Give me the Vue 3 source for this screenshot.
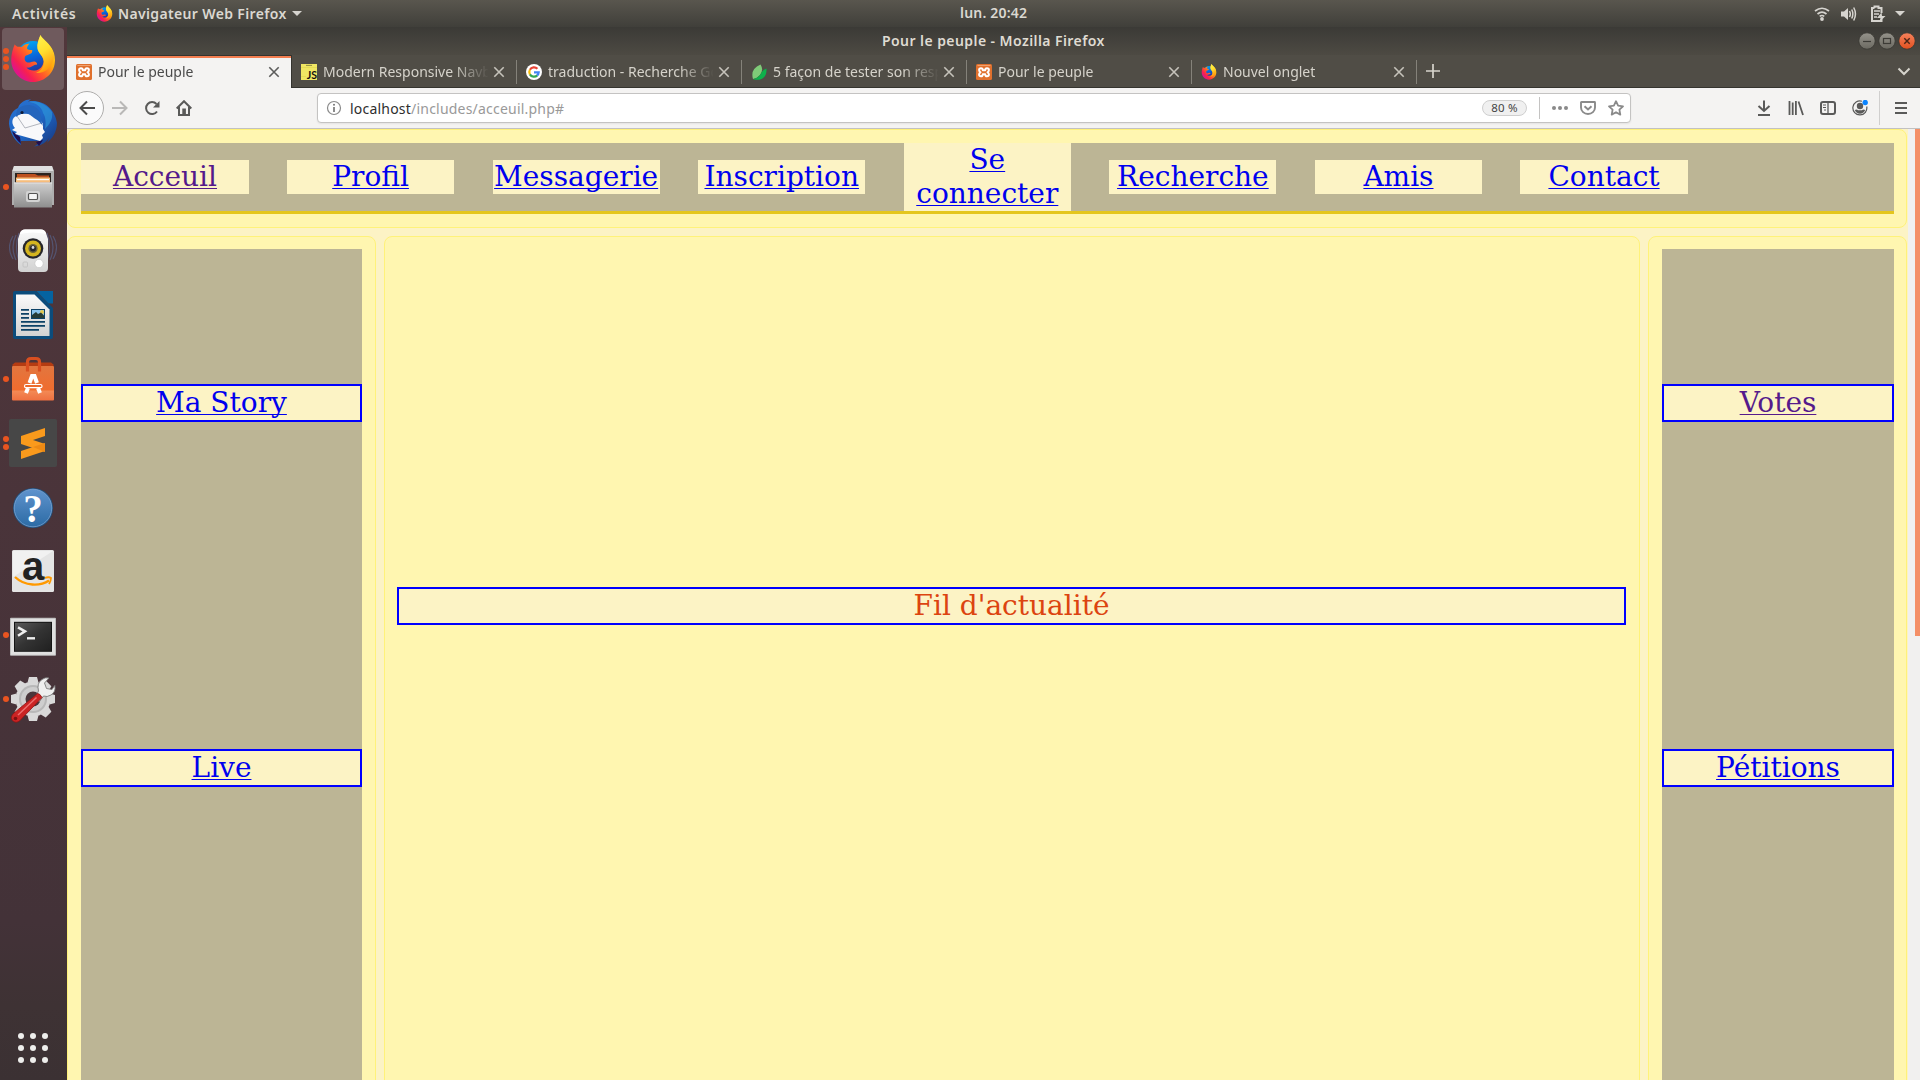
<script setup>
const tabs = [
  { title: 'Pour le peuple', icon: 'xampp', active: true },
  { title: 'Modern Responsive Navbar', icon: 'js', glyph: 'JS' },
  { title: 'traduction - Recherche Google', icon: 'google' },
  { title: '5 façon de tester son responsive', icon: 'leaf' },
  { title: 'Pour le peuple', icon: 'xampp' },
  { title: 'Nouvel onglet', icon: 'firefox' },
]
const dock = [
  { icon: 'firefox', dots: 3, active: true },
  { icon: 'thunderbird', dots: 0 },
  { icon: 'files', dots: 1 },
  { icon: 'rhythmbox', dots: 0 },
  { icon: 'writer', dots: 0 },
  { icon: 'software', dots: 1 },
  { icon: 'sublime', dots: 2 },
  { icon: 'help', dots: 0, glyph: '?' },
  { icon: 'amazon', dots: 0, glyph: 'a' },
  { icon: 'terminal', dots: 1 },
  { icon: 'tools', dots: 1 },
]
const nav = ['Acceuil', 'Profil', 'Messagerie', 'Inscription', 'Se connecter', 'Recherche', 'Amis', 'Contact']
</script>

<template>
  <svg class="defs" width="0" height="0" aria-hidden="true">
    <defs>
      <linearGradient id="fxBody" x1="0.9" y1="0.1" x2="0.15" y2="0.8">
        <stop offset="0" stop-color="#ffe226" /><stop offset=".35" stop-color="#ffa90e" />
        <stop offset=".62" stop-color="#ff5a2a" /><stop offset=".85" stop-color="#f8204f" /><stop offset="1" stop-color="#e01587" />
      </linearGradient>
      <linearGradient id="fxFlame" x1="0" y1="0" x2="0.3" y2="1">
        <stop offset="0" stop-color="#fff44f" /><stop offset=".5" stop-color="#ffe030" /><stop offset="1" stop-color="#ff9a0e" />
      </linearGradient>
      <linearGradient id="fxGlobe" x1="0.3" y1="0" x2="0.6" y2="1">
        <stop offset="0" stop-color="#00a8f4" /><stop offset=".5" stop-color="#0a63d8" /><stop offset="1" stop-color="#2b2a8c" />
      </linearGradient>
      <linearGradient id="tbBlue" x1="0" y1="0" x2="1" y2="1">
        <stop offset="0" stop-color="#2a72d0" /><stop offset=".5" stop-color="#1f68c8" /><stop offset="1" stop-color="#17357c" />
      </linearGradient>
      <linearGradient id="grey" x1="0" y1="0" x2="0" y2="1">
        <stop offset="0" stop-color="#cfcfcf" /><stop offset="1" stop-color="#8e8e8e" />
      </linearGradient>
      <linearGradient id="white" x1="0" y1="0" x2="0" y2="1">
        <stop offset="0" stop-color="#fafafa" /><stop offset="1" stop-color="#d2d2d2" />
      </linearGradient>
      <linearGradient id="bag" x1="0" y1="0" x2="0" y2="1">
        <stop offset="0" stop-color="#e2763f" /><stop offset=".7" stop-color="#f06c2e" /><stop offset=".72" stop-color="#f38a55" /><stop offset="1" stop-color="#ef7040" />
      </linearGradient>
      <linearGradient id="helpBlue" x1="0" y1="0" x2="0" y2="1">
        <stop offset="0" stop-color="#5f93cd" /><stop offset="1" stop-color="#2c6ba5" />
      </linearGradient>
      <linearGradient id="term" x1="0" y1="0" x2="1" y2="1">
        <stop offset="0" stop-color="#5a5a5a" /><stop offset=".5" stop-color="#333" /><stop offset="1" stop-color="#202020" />
      </linearGradient>
      <linearGradient id="btnGrey" x1="0" y1="0" x2="0" y2="1">
        <stop offset="0" stop-color="#95938b" /><stop offset="1" stop-color="#6b6961" />
      </linearGradient>
      <linearGradient id="btnRed" x1="0" y1="0" x2="0" y2="1">
        <stop offset="0" stop-color="#f6825c" /><stop offset="1" stop-color="#e2501f" />
      </linearGradient>
    </defs>

    <symbol id="i-firefox" viewBox="0 0 48 48">
      <circle cx="24" cy="23" r="17" fill="url(#fxGlobe)" />
      <path d="M5.8 9.2 C4 13 2.2 19 2.2 25.500 C2.500 37 12 47 24 47 C36 47 46 37.500 46 25 C46 15 40 9.500 36.500 6 C33 2.500 32 1.500 31.500 0 C29.500 5 28 9 28.500 13 C29 18.500 34 20 34.500 26 C34.500 31 31 35 26 35.500 C22.500 36 19 34.500 17.500 32.500 C22 33.500 24 29.500 27.500 29.800 C28.800 29.500 28 27 25.500 26.500 C22 26.200 20.500 29 17 26.700 C15.300 25.500 15.500 23 16 21.500 C17 19.500 20 20.500 23 17.500 L23.300 15 C20.500 15 18.500 14.500 18 13.500 C18 11.500 19.500 9.500 20.500 8.500 C17 8.800 14.500 10 12.500 12 C10 11.500 8.500 11.800 8 11.500 C6.500 10.500 6 9.800 5.800 9.200Z" fill="url(#fxBody)" />
      <path d="M31.500 0 C29.500 5 27.800 9 28.500 13.500 C29.200 18.500 34.500 20.500 35 26.500 C35.200 31 32 36 27 38 C36 38.500 43 33 45 22 C44.500 14 40 9.500 36.500 6 C33 2.500 32 1.500 31.500 0Z" fill="url(#fxFlame)" />
    </symbol>

    <symbol id="i-thunderbird" viewBox="0 0 48 48">
      <path d="M9 9 C11 3 17 0 22 .5 C20 1.500 19 2.500 19 2.500 C34 0 46 10 48 24 C48 33 43 40 38 43.500 L40 39 C36 45 30 47 25 47.500 C28 46 30 44 31 42 L12 42 L12 46 C6 42 1 34 0 25 C0 17 4 11 9 9Z" fill="url(#tbBlue)" />
      <path d="M3 32 C5 38 8 41 12 45 L11 38Z M27 43 l7 -2 -4 6z" fill="#1d0f52" />
      <path d="M4 20 C6 16 14 14 19 15 C26 17 31 20 34 25 L34 30 L36 33 L33 36 L34 39 L31 42 L6 35 L8 33 L3 31 L6 29 C3 26 3 22 4 20Z" fill="#f8f8fa" />
      <path d="M8 17 L16 29 L33 24" fill="none" stroke="#a9adb5" stroke-width=".9" />
      <path d="M10 9 C16 4 27 5 31 13 C33 18 31 20 34 27 C28 19 25 20 20 15 C16 13 10 15 7 18 C7 13 8 11 10 9Z" fill="#2465bd" />
      <path d="M20 3 C27 4 33 8 34 14 C37 18 37 25 36 30 C41 25 44 20 43 13 C38 6 29 1 20 3Z" fill="#2f9bdc" opacity=".6" />
      <circle cx="13" cy="13.500" r="1.600" fill="#101b38" />
    </symbol>

    <symbol id="i-files" viewBox="0 0 48 48">
      <path d="M5 3 H43 L45 8 V42 H3 V8Z" fill="#aeaeae" />
      <path d="M5 3 H43 L44.500 8 H3.500Z" fill="#e0e0e0" />
      <rect x="6" y="10" width="36" height="12" fill="#2d2420" />
      <path d="M8 11 H26 L29 12.500 H40 V20 H8Z" fill="#bd501f" />
      <rect x="7" y="14.500" width="34" height="5" fill="#f6bd7c" /><rect x="8" y="16" width="32" height="1.200" fill="#fff" />
      <path d="M5 19.500 H43 V44.500 H5Z" fill="url(#grey)" />
      <path d="M5 19.500 H43 V20.600 H5Z" fill="#e4e4e4" />
      <rect x="17" y="28" width="14" height="11" rx="2" fill="#d3d3d3" />
      <rect x="19.500" y="30.500" width="9" height="6" rx="1" fill="#f5f5f5" stroke="#555" stroke-width="1.200" />
    </symbol>

    <symbol id="i-rhythmbox" viewBox="0 0 48 48">
      <g fill="none" stroke="#586894" stroke-width="1.200" opacity=".6">
        <path d="M7 8 Q1 20 7 33 M4 9 Q-3 20 4 32 M10 6 Q5 20 10 34" /><path d="M41 8 Q47 20 41 33 M44 9 Q51 20 44 32 M38 6 Q43 20 38 34" />
      </g>
      <path d="M11 6 Q12 2.500 16 2.500 H32 Q36 2.500 37 6 L39 12 V41 Q39 45 35 45 H13 Q9 45 9 41 V12Z" fill="url(#white)" />
      <path d="M11 7 Q12 2.500 16 2.500 H32 Q36 2.500 37 7 Q24 4 11 7Z" fill="#fff" />
      <circle cx="24" cy="21.500" r="10.300" fill="#26262b" /><circle cx="24" cy="21.500" r="8" fill="#d5b51f" />
      <circle cx="24" cy="21.500" r="4.600" fill="#6b6238" /><circle cx="24" cy="21.500" r="3" fill="#26262b" /><circle cx="24" cy="20.500" r="1.400" fill="#ddd" />
      <circle cx="30" cy="36.500" r="4.200" fill="#fff" stroke="#c6c6c6" stroke-width=".7" />
      <rect x="14" y="35" width="4.500" height="5" rx="1" fill="none" stroke="#c4c4c4" />
    </symbol>

    <symbol id="i-writer" viewBox="0 0 48 48">
      <path d="M6 0 H27 L44 17 V46 Q44 48 42 48 H6 Q4 48 4 46 V2 Q4 0 6 0Z" fill="#0b4c7c" />
      <path d="M7 3.500 H25.500 L40.500 18.500 V45 H7Z" fill="url(#white)" />
      <path d="M27.500 0 H44 V12.500 H39.500Z" fill="#0563a0" />
      <path d="M12 18.800 h8 M12 22.800 h8 M12 26.800 h8 M12 30.800 h24 M12 34.800 h24 M12 38.800 h18" stroke="#0c4166" stroke-width="1.800" />
      <rect x="22" y="18" width="14" height="10" fill="#0c4166" /><rect x="23" y="19" width="12" height="8" fill="#89c3ec" />
      <circle cx="33" cy="21" r="2" fill="#e3c74c" /><path d="M23 27 V24 l4-3 2 2 3-1.500 3 3 V27Z" fill="#263b35" />
    </symbol>

    <symbol id="i-software" viewBox="0 0 48 48">
      <g transform="translate(0 2)">
        <path d="M3 8 L6 5.500 H42 L45 8 L43 10 H5Z" fill="#b53c12" />
        <rect x="3" y="9" width="42" height="34.500" rx="1" fill="url(#bag)" />
        <path d="M18.500 14.500 V5 Q18.500 1.500 22 1.500 H27 Q30.500 1.500 30.500 5 V14.500" fill="none" stroke="#d94f20" stroke-width="3.200" />
        <path d="M17 36 L19 31 M31 36 L29 31" stroke="#fff" stroke-width="4" />
        <path d="M20.500 26 L23 19 H25.500 L28 26" fill="none" stroke="#fff" stroke-width="4" />
        <rect x="15.500" y="27.500" width="17.500" height="3.200" rx="1.500" fill="#ec6a2c" stroke="#fff" stroke-width="1.200" />
      </g>
    </symbol>

    <symbol id="i-sublime" viewBox="0 0 48 48">
      <rect width="48" height="48" rx="2" fill="#474747" />
      <path d="M12 17 L36 9 V17 L12 25Z" fill="#fa9a1c" /><path d="M12 17 L36 25 V33 L12 25Z" fill="#fa9a1c" />
      <path d="M12 32 L36 24 V32 L12 40Z" fill="#fa9a1c" /><path d="M24 28 L36 24 V33Z" fill="#e17d0e" opacity=".55" />
    </symbol>

    <symbol id="i-help" viewBox="0 0 48 48">
      <circle cx="24" cy="25" r="20" fill="#20517f" /><circle cx="24" cy="25" r="18.800" fill="url(#helpBlue)" stroke="#86aedb" stroke-width=".7" />
    </symbol>

    <symbol id="i-amazon" viewBox="0 0 48 48">
      <rect x="3" y="3" width="42" height="42" rx="1.500" fill="#e4e4e4" /><path d="M4 4 H44 L4 30Z" fill="#f1f1f1" />
      <path d="M6 30 C16 39.500 31 39.500 40 33.500" fill="none" stroke="#ff9900" stroke-width="2.400" /><path d="M35.500 31 Q40 29.500 42 31 Q42 33.500 40 37" fill="none" stroke="#ff9900" stroke-width="1.800" />
    </symbol>

    <symbol id="i-terminal" viewBox="0 0 48 48">
      <g transform="translate(0 1.800)">
        <rect x="1" y="5" width="46" height="38" rx="1" fill="#bdbdbd" /><rect x="2" y="6" width="44" height="36" fill="#e0e0e0" />
        <rect x="5" y="9" width="38" height="30" fill="#141414" /><rect x="6" y="10" width="36" height="28" fill="url(#term)" />
        <path d="M9 14.500 L16 18.500 L9 23" fill="none" stroke="#eee" stroke-width="2.500" /><path d="M18 25.500 H26" stroke="#eee" stroke-width="2.400" />
      </g>
    </symbol>

    <symbol id="i-tools" viewBox="0 0 48 48">
      <g transform="translate(0 -1)">
        <g fill="#d9d9d9">
          <circle cx="24" cy="25" r="17.500" />
          <g v-for="a in 8" :key="a" :transform="`rotate(${a * 45} 24 25)`"><path d="M18.500 8.500 L20 3 H28 L29.500 8.500Z" /></g>
        </g>
        <circle cx="24" cy="25" r="14" fill="#b8b8b8" /><circle cx="24" cy="25" r="12" fill="#cecece" /><circle cx="24" cy="25" r="7.500" fill="#4b363b" />
        <path d="M26 24 L29.500 17 Q27.500 9 33 5.500 Q36 3 40 4 L35.500 9 L37.500 14.500 L43 15.500 L45.800 11.500 Q47 18 42 21 Q38 23.500 34.500 22 L30 28Z" fill="#efefef" stroke="#7c7c7c" stroke-width=".9" />
        <path d="M28.500 19.500 Q31 19.500 33 23.500 L11 46.500 Q7 50 3.500 46.500 Q.5 43 5 39Z" fill="#cb2424" stroke="#8e1414" stroke-width=".8" /><path d="M27.500 23.500 L9 41" stroke="#ee7070" stroke-width="1.400" />
        <circle cx="6.500" cy="44.500" r="1.800" fill="#7d1010" />
      </g>
    </symbol>

    <symbol id="i-xampp" viewBox="0 0 16 16">
      <rect width="16" height="16" rx="1.500" fill="#e0702d" /><path d="M1.500 1.500 H14.500" stroke="#f0a06d" />
      <path d="M6.800 6.300 Q6.800 4.200 5 4.200 Q3.100 4.200 3.100 6 Q3.100 7.500 4.500 8.300 Q3.100 9 3.100 10.500 Q3.100 12.300 5 12.300 Q6.800 12.300 6.800 10.200 H9.200 Q9.200 12.300 11 12.300 Q12.900 12.300 12.900 10.500 Q12.900 9 11.500 8.300 Q12.900 7.500 12.900 6 Q12.900 4.200 11 4.200 Q9.200 4.200 9.200 6.300Z" fill="none" stroke="#fff" stroke-width="2" stroke-linejoin="round" />
    </symbol>
    <symbol id="i-js" viewBox="0 0 16 16">
      <rect width="16" height="16" fill="#f0e763" /><path d="M0 3.500 H16 M0 12.500 H5" stroke="#e2d94e" stroke-width=".7" /><path d="M5 1.400 H11" stroke="#77733a" stroke-width=".8" />
    </symbol>
    <symbol id="i-google" viewBox="0 0 16 16">
      <circle cx="8" cy="8" r="8" fill="#fff" />
      <g fill="none" stroke-width="2.200">
        <path d="M3.900 5.700 A4.700 4.700 0 0 1 11.400 4.800" stroke="#ea4335" /><path d="M3.900 10.400 A4.800 4.800 0 0 1 3.900 5.700" stroke="#fbbc05" />
        <path d="M11.300 11.400 A4.800 4.800 0 0 1 3.900 10.400" stroke="#34a853" /><path d="M8 8.300 H12.700 A4.800 4.800 0 0 1 11.100 11.500" stroke="#4285f4" />
      </g>
    </symbol>
    <symbol id="i-leaf" viewBox="0 0 16 16">
      <path d="M2 15 Q-1 5 9.500 .5 Q13 6 9 11 Q6 14.500 2 15Z" fill="#7fcb78" /><path d="M15.500 4.500 Q16 14 8.500 15.800 Q5 16 2 15.300 Q8 13.500 10 9.500 Q11 6 15.500 4.500Z" fill="#0db14b" />
    </symbol>
  </svg>

  <div class="desktop">
    <header class="topbar">
      <div class="top-left">
        <span class="activities">Activités</span>
        <svg class="fx16"><use href="#i-firefox" /></svg>
        <span class="appname">Navigateur Web Firefox</span>
        <i class="caret"></i>
      </div>
      <span class="clock">lun. 20:42</span>
      <div class="tray">
        <svg width="16" height="16" viewBox="0 0 16 16"><g fill="none" stroke="#d6d4cf" stroke-width="1.700"><path d="M1 5 Q8 -.5 15 5" /><path d="M3.500 8 Q8 4.200 12.500 8" /><path d="M5.700 10.400 Q8 8.600 10.300 10.400" /></g><circle cx="8" cy="13" r="1.900" fill="#d6d4cf" /></svg>
        <svg width="16" height="16" viewBox="0 0 16 16"><path d="M0 5.500 H3 L7 2 V14 L3 10.500 H0Z" fill="#d6d4cf" /><g fill="none" stroke="#d6d4cf" stroke-width="1.500"><path d="M8.500 5 Q10.200 8 8.500 11" /><path d="M10.700 3.500 Q13 8 10.700 12.500" /><path d="M12.700 1.500 Q16.200 8 12.700 14.500" /></g></svg>
        <svg class="battery" width="16" height="18" viewBox="0 0 16 18"><path d="M4.500 3 V1.500 H8.500 V3 H11.500 V8 M11.500 14 V16 H2 V3 H4.500" fill="none" stroke="#d6d4cf" stroke-width="2" /><path d="M4 6 H10 M4 9 H9 M4 12 H7" stroke="#d6d4cf" stroke-width="1.300" /><path d="M11.500 7.500 L7 13 H10.500 L9.500 17 L15.500 11 H12Z" fill="#d6d4cf" /></svg>
        <i class="caret"></i>
      </div>
    </header>

    <div class="main">
      <aside class="dock">
        <div v-for="d in dock" :key="d.icon" class="slot">
          <div class="tile" :class="{ active: d.active }">
            <div class="dots"><i v-for="n in d.dots" :key="n"></i></div>
            <div class="icon">
              <svg width="48" height="48"><use :href="`#i-${d.icon}`" /></svg>
              <span v-if="d.glyph" class="glyph" :class="d.icon">{{ d.glyph }}</span>
            </div>
          </div>
        </div>
        <div class="apps"><i v-for="n in 9" :key="n"></i></div>
      </aside>

      <section class="window">
        <div class="titlebar">
          <span class="title">Pour le peuple - Mozilla Firefox</span>
          <div class="wbtns">
            <svg width="18" height="18" viewBox="0 0 18 18"><circle cx="9" cy="9" r="8.200" fill="url(#btnGrey)" stroke="#383732" stroke-width=".8" /><path d="M5 9.500 H13" stroke="#3c3b36" stroke-width="1.200" /></svg>
            <svg width="18" height="18" viewBox="0 0 18 18"><circle cx="9" cy="9" r="8.200" fill="url(#btnGrey)" stroke="#383732" stroke-width=".8" /><rect x="5.500" y="6.500" width="7" height="5" fill="none" stroke="#3c3b36" stroke-width="1.200" /></svg>
            <svg width="18" height="18" viewBox="0 0 18 18"><circle cx="9" cy="9" r="8.200" fill="url(#btnRed)" stroke="#383732" stroke-width=".8" /><path d="M6.300 6.300 L11.700 11.700 M11.700 6.300 L6.300 11.700" stroke="#4b2516" stroke-width="1.400" /></svg>
          </div>
        </div>

        <div class="tabs">
          <div v-for="(t, i) in tabs" :key="i" class="tab" :class="{ active: t.active }">
            <div class="icon">
              <svg width="16" height="16"><use :href="`#i-${t.icon}`" /></svg>
              <span v-if="t.glyph" class="glyph" :class="t.icon">{{ t.glyph }}</span>
            </div>
            <span class="tt">{{ t.title }}</span>
            <svg class="x" width="12" height="12" viewBox="0 0 12 12"><path d="M1.300 1.300 L10.700 10.700 M10.700 1.300 L1.300 10.700" fill="none" stroke="currentColor" stroke-width="1.600" /></svg>
          </div>
          <svg class="plus" width="14" height="14" viewBox="0 0 14 14"><path d="M7 0 V14 M0 7 H14" stroke="#d6d4cc" stroke-width="1.700" /></svg>
          <svg class="alltabs" width="14" height="9" viewBox="0 0 14 9"><path d="M1.500 1.500 L7 7 L12.500 1.500" fill="none" stroke="#d6d4cc" stroke-width="2" /></svg>
        </div>

        <div class="toolbar">
          <div class="back"><svg width="16" height="16" viewBox="0 0 16 16"><path d="M16 8 H1.500 M8 1.500 L1.500 8 L8 14.500" fill="none" stroke="#4c4c4b" stroke-width="2" /></svg></div>
          <svg class="fwd" width="16" height="16" viewBox="0 0 16 16"><path d="M0 8 H14.500 M8 1.500 L14.500 8 L8 14.500" fill="none" stroke="#b9b8b7" stroke-width="2" /></svg>
          <svg class="reload" width="16" height="16" viewBox="0 0 16 16"><path d="M12.500 4 A6 6 0 1 0 13 11.500" fill="none" stroke="#5a5a59" stroke-width="2" /><path d="M15.500 1 V7.500 H9Z" fill="#5a5a59" /></svg>
          <svg class="home" width="16" height="16" viewBox="0 0 16 16"><path d="M.7 8.500 L8 1.200 L15.300 8.500" fill="none" stroke="#5a5a59" stroke-width="2" /><path d="M3 7 V15 H13 V7" fill="none" stroke="#5a5a59" stroke-width="2" /><rect x="6.300" y="8.500" width="3.600" height="6" fill="#5a5a59" /></svg>
          <div class="url">
            <svg width="16" height="16" viewBox="0 0 16 16"><circle cx="8" cy="8" r="6.500" fill="none" stroke="#8a8a8a" stroke-width="1.200" /><path d="M8 7 V12" stroke="#777" stroke-width="1.700" /><circle cx="8" cy="4.700" r="1" fill="#777" /></svg>
            <span class="addr"><b>localhost</b>/includes/acceuil.php#</span>
            <span class="zoom">80 %</span>
            <i class="usep"></i>
            <svg width="16" height="16" viewBox="0 0 16 16"><g fill="#8a8a8a"><circle cx="2" cy="8" r="2" /><circle cx="8" cy="8" r="2" /><circle cx="14" cy="8" r="2" /></g></svg>
            <svg width="16" height="16" viewBox="0 0 16 16"><path d="M1.500 2 H14.500 Q15 2 15 2.500 V7.500 A7 6.500 0 0 1 1 7.500 V2.500 Q1 2 1.500 2Z" fill="none" stroke="#8a8a8a" stroke-width="1.900" /><path d="M4.500 6.200 L8 9.400 L11.500 6.200" fill="none" stroke="#8a8a8a" stroke-width="2" /></svg>
            <svg width="16" height="16" viewBox="0 0 16 16"><path d="M8 1.200 L10.100 5.700 L15 6.300 L11.400 9.700 L12.300 14.600 L8 12.200 L3.700 14.600 L4.600 9.700 L1 6.300 L5.900 5.700Z" fill="none" stroke="#8a8a8a" stroke-width="1.800" stroke-linejoin="round" /></svg>
          </div>
          <div class="tools">
            <svg width="16" height="16" viewBox="0 0 16 16"><path d="M8 .5 V11 M2.500 6 L8 11 L13.500 6 M2 15 H14" fill="none" stroke="#5a5a59" stroke-width="2" /></svg>
            <svg width="16" height="16" viewBox="0 0 16 16"><path d="M1.500 1 V15 M4.700 2.500 V15 M7.900 1 V15 M10.500 1.500 L15 15" fill="none" stroke="#5a5a59" stroke-width="1.800" /></svg>
            <svg width="16" height="16" viewBox="0 0 16 16"><rect x="1" y="2" width="14" height="12" rx="2" fill="none" stroke="#5a5a59" stroke-width="2" /><path d="M8 2 V14" stroke="#5a5a59" stroke-width="1.300" /><path d="M3 5 H6 M3 7.500 H6 M4 10 H6" stroke="#5a5a59" /></svg>
            <svg width="16" height="16" viewBox="0 0 16 16"><path d="M10 1.300 A7 7 0 1 0 14.700 6.500" fill="none" stroke="#5a5a59" stroke-width="1.200" /><circle cx="8" cy="6" r="3.200" fill="#5a5a59" /><path d="M2.800 10 Q5 9 6 10.200 H10 Q11 9 13.200 10 Q11.500 13.800 8 13.800 Q4.500 13.800 2.800 10Z" fill="#5a5a59" /><circle cx="13.200" cy="2.500" r="2.700" fill="#0a84ff" /></svg>
            <i class="tsep"></i>
            <svg width="16" height="16" viewBox="0 0 16 16"><path d="M2 3 H14 M2 8 H14 M2 13 H14" stroke="#5a5a59" stroke-width="2" /></svg>
          </div>
        </div>

        <div class="viewport">
          <div class="page">
            <div class="box head">
              <nav class="nav"><div v-for="n in nav" :key="n" class="item"><a :class="{ visited: n === 'Acceuil' }">{{ n }}</a></div></nav>
            </div>
            <div class="cols">
              <div class="box left"><div class="fill">
                <div class="entry"><a>Ma Story</a></div>
                <div class="entry"><a>Live</a></div>
              </div></div>
              <div class="box mid"><div class="entry feed">Fil d'actualité</div></div>
              <div class="box right"><div class="fill">
                <div class="entry"><a class="visited">Votes</a></div>
                <div class="entry"><a>Pétitions</a></div>
              </div></div>
            </div>
          </div>
          <div class="scroll"><i></i></div>
        </div>
      </section>
    </div>
  </div>
</template>

<style>
body { margin: 0; overflow: hidden; }
</style>

<style scoped>
* { box-sizing: border-box; }
svg { display: block; flex: none; }
.defs { position: absolute; }
.desktop { width: 1920px; height: 1080px; display: flex; flex-direction: column; overflow: hidden; font-family: "Noto Sans", "Open Sans", sans-serif; font-size: 14px; }
.topbar { height: 27px; flex: none; display: flex; justify-content: space-between; background: linear-gradient(#59564e, #403f3a); color: #dbd8d1; font-weight: 600; line-height: 27px; }
.top-left { display: flex; align-items: center; width: 960px; padding-left: 12px; }
.activities { width: 84px; letter-spacing: .65px; }
.fx16 { width: 17px; height: 17px; margin-right: 5px; }
.caret { width: 0; height: 0; border: 5px solid transparent; border-top-color: #d6d4cf; border-bottom: 0; }
.appname { width: 174px; white-space: nowrap; letter-spacing: .35px; }
.clock { flex: 1; line-height: 26px; letter-spacing: .2px; }
.tray { display: flex; align-items: center; gap: 11px; padding-right: 15px; }
.battery { margin-left: 2px; margin-right: -2px; }
.main { flex: 1; display: flex; min-height: 0; }
.dock { width: 67px; flex: none; display: flex; flex-direction: column; background: linear-gradient(#51373b, #4a343a 45%, #433238 85%, #3e3234 93%, #3b3133); }
.slot { height: 64px; display: flex; align-items: center; padding-left: 2px; }
.tile { width: 62px; height: 62px; border-radius: 4px; display: flex; align-items: center; }
.tile.active { background: #6f5a5d; }
.dots { width: 7px; display: flex; flex-direction: column; align-items: center; gap: 2px; }
.dots i { width: 6px; height: 6px; border-radius: 50%; background: #e95420; }
.icon { position: relative; flex: none; }
.glyph { position: absolute; left: 0; width: 100%; text-align: center; font-weight: bold; }
.glyph.help { top: 2px; font: bold 39px/48px "Liberation Serif", serif; color: #fff; }
.glyph.amazon { top: -5px; font: bold 40px/48px "Liberation Sans", sans-serif; color: #222; }
.glyph.js { top: 3px; font: bold 10.500px/16px Lato, sans-serif; color: #111; text-align: right; }
.apps { margin: auto 0 17px 18px; display: grid; grid-template-columns: repeat(3, 6px); gap: 6px; }
.apps i { height: 6px; border-radius: 50%; background: #eeeeec; }
.window { flex: 1; min-width: 0; display: flex; flex-direction: column; }
.titlebar { height: 28px; flex: none; display: flex; align-items: center; background: linear-gradient(#3b3a36, #4d4a43); color: #dfdbd2; font-weight: 600; }
.title { flex: 1; padding-left: 815px; padding-bottom: 2px; white-space: nowrap; letter-spacing: .43px; }
.wbtns { display: flex; gap: 2px; padding-right: 4px; }
.tabs { height: 33px; flex: none; display: flex; align-items: center; background: #504d46; border-bottom: 1px solid #35342f; color: #d6d3cb; }
.tab { width: 225px; height: 32px; display: flex; align-items: center; padding: 2px 12px 0 9px; position: relative; }
.tab:not(.active)::after { content: ""; position: absolute; right: 0; top: 5px; width: 1px; height: 24px; background: #85827a; }
.tab.active { height: 33px; background: #f4f3f2; color: #4b4b4b; border-top: 1px solid #35342f; box-shadow: inset 0 2px #f47e50; border-right: 1px solid #35342f; align-self: flex-start; margin-bottom: -1px; padding: 1px 11px 1px 9px; }
.tt { width: 165px; margin: 0 4px 0 6px; padding-bottom: 2px; white-space: nowrap; overflow: hidden; -webkit-mask-image: linear-gradient(90deg, #000 130px, transparent 166px); mask-image: linear-gradient(90deg, #000 130px, transparent 166px); }
.x { margin-left: auto; color: #c6c3bb; }
.active .x { color: #5c5c5b; }
.plus { margin-left: 9px; }
.alltabs { margin-left: auto; margin-right: 9px; }
.toolbar { height: 41px; flex: none; display: flex; align-items: center; background: #f4f3f2; border-bottom: 1px solid #c2c1c1; }
.back { width: 34px; height: 34px; margin-left: 3px; border: 1px solid #aeadac; border-radius: 50%; background: #fbfbfb; display: flex; align-items: center; justify-content: center; }
.fwd { margin-left: 8px; }
.reload { margin-left: 16px; }
.home { margin-left: 16px; }
.url { width: 1314px; height: 30px; margin-left: 125px; border: 1px solid #c4c3c2; border-radius: 4px; background: #fff; display: flex; align-items: center; padding-left: 8px; padding-right: 6px; gap: 12px; box-shadow: 0 1px 2px #0001; }
.addr { flex: 1; margin-left: -4px; color: #999; letter-spacing: .21px; }
.addr b { font-weight: 400; color: #2e2e2e; }
.zoom { width: 45px; height: 16px; border: 1px solid #cfcfcf; border-radius: 8px; background: #f0f0f0; color: #444; font-size: 11.500px; line-height: 14px; text-align: center; letter-spacing: .2px; }
.usep { width: 1px; height: 22px; background: #c4c3c2; }
.tools { margin-left: auto; display: flex; align-items: center; gap: 16px; padding-right: 11px; }
.tsep { width: 1px; height: 34px; background: #d0cfce; margin: 0 -3px 0 -5px; }
.viewport { flex: 1; min-height: 0; display: flex; }
.page { flex: 1; background: #fcf3c5; overflow: hidden; font-family: "DejaVu Serif", serif; font-size: 28px; line-height: 34px; text-align: center; }
.box { background: #fff6b0; border: 1px solid #fff27a; border-radius: 8px; padding: 13px; }
.head { height: 99px; width: 1840px; padding-bottom: 12px; }
.nav { height: 71px; background: #bcb595; border-bottom: 3px solid #e4c61d; display: flex; align-items: center; gap: 38.400px; width: 1813px; padding-left: .4px; }
.item { width: 167.200px; flex: none; background: #fcf3c5; }
a { color: #00e; text-decoration: underline; text-decoration-thickness: 1px; text-underline-offset: 2px; text-decoration-skip-ink: none; }
a.visited { color: #551a8b; }
.cols { display: flex; gap: 8px; margin-top: 8px; height: 1000px; }
.box.left { width: 309px; padding: 12px 13px; }
.box.mid { width: 1256px; padding: 12px 13px 12px 12px; }
.box.right { width: 259px; padding: 12px 12px 12px 13px; }
.box.left, .box.mid, .box.right { flex: none; }
.fill { height: 100%; background: #bcb595; padding-top: 135px; }
.entry { height: 38px; border: 2px solid #00f; background: #fcf3c5; }
.fill .entry { margin-bottom: 327px; }
.feed { margin-top: 338px; color: #dc4410; }
.scroll { width: 12px; background: #f1f0ef; display: flex; justify-content: flex-end; }
.scroll i { width: 5px; height: 507px; background: #f48f66; }
</style>
